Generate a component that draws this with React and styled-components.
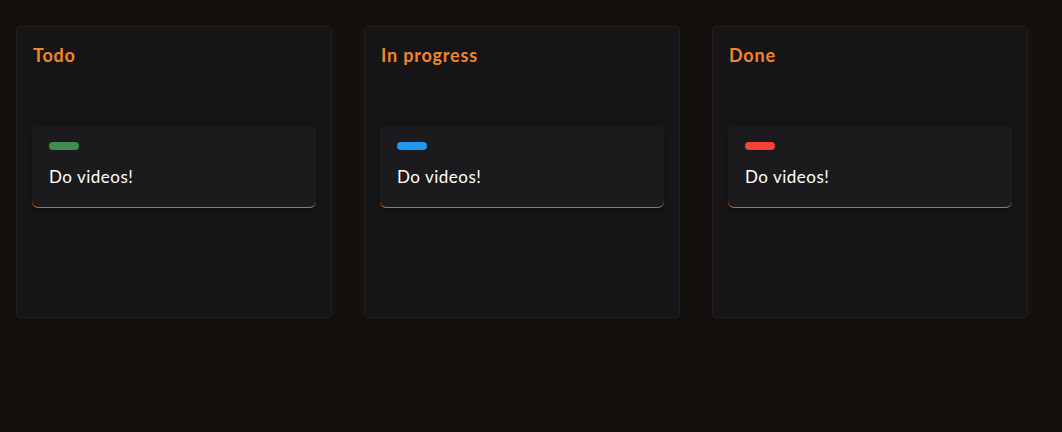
import React from 'react';
import styled, { createGlobalStyle } from 'styled-components';

const GlobalStyle = createGlobalStyle`
  html, body {
    margin: 0;
    padding: 0;
    background: #13100e;
  }
  body {
    font-family: "Lato", "Noto Sans", sans-serif;
  }
`;

const columns = [
  { id: 'todo', title: 'Todo', tag: '#3f8c4f' },
  { id: 'progress', title: 'In progress', tag: '#2196f3' },
  { id: 'done', title: 'Done', tag: '#f44336' },
];

const App = () => (
  <>
    <GlobalStyle />
    <Board>
      {columns.map(col => (
        <Column key={col.id}>
          <ColumnTitle>{col.title}</ColumnTitle>
          <CardList>
            <Card>
              <Tag color={col.tag} />
              <CardText>Do videos!</CardText>
            </Card>
          </CardList>
        </Column>
      ))}
    </Board>
  </>
);

export default App;

const Board = styled.div`
  display: flex;
  gap: 32px;
  padding: 26px 16px;
  min-height: 432px;
  box-sizing: border-box;
`;

const Column = styled.div`
  width: 316px;
  height: 292px;
  box-sizing: border-box;
  background-color: #151518;
  border: 1px solid #25211d;
  border-radius: 4px;
  padding: 16px;
  display: flex;
  flex-direction: column;
`;

const ColumnTitle = styled.h2`
  margin: 0;
  font-size: 18px;
  font-weight: 700;
  line-height: 24px;
  letter-spacing: 0.8px;
  color: #f3842c;
`;

const CardList = styled.div`
  margin: 59px -1px 0;
  display: flex;
  flex-direction: column;
  gap: 12px;
`;

const Card = styled.div`
  background-color: #1b1b1e;
  border-radius: 6px;
  padding: 16px 17px 18px;
  box-shadow: 0 1px 0 #c46a22, 0 2px 3px rgba(0, 0, 0, 0.4);
  display: flex;
  flex-direction: column;
  gap: 15px;
`;

const Tag = styled.span`
  display: block;
  width: 30px;
  height: 8px;
  border-radius: 4px;
  background-color: ${props => props.color};
`;

const CardText = styled.p`
  margin: 0;
  font-size: 17px;
  line-height: 24px;
  letter-spacing: 0.5px;
  color: #ffffff;
`;
